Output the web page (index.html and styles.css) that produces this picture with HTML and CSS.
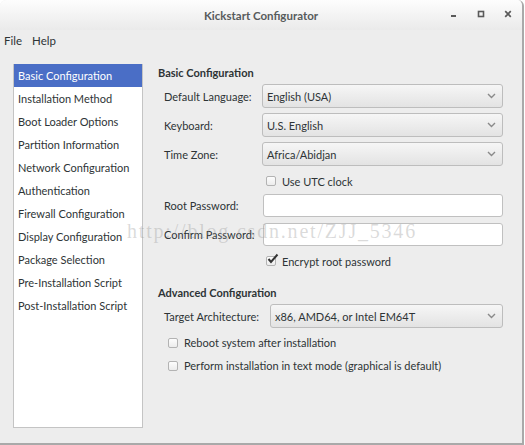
FILE: index.html
```
<!DOCTYPE html>
<html>
<head>
<meta charset="utf-8">
<link rel="stylesheet" href="styles.css">
</head>
<body>
<div class="window">
  <div class="titlebar">
    <div class="title">Kickstart Configurator</div>
    <div class="controls">
      <span class="ctl"><svg width="8" height="8" viewBox="0 0 8 8"><rect x="1" y="5" width="5" height="2" fill="#5a5a5a"/></svg></span>
      <span class="ctl"><svg width="8" height="8" viewBox="0 0 8 8"><rect x="1.5" y="1.5" width="5" height="5" fill="none" stroke="#5a5a5a" stroke-width="1.6"/></svg></span>
      <span class="ctl"><svg width="8" height="8" viewBox="0 0 8 8"><path d="M1.2 1.2 L6.8 6.8 M6.8 1.2 L1.2 6.8" stroke="#5a5a5a" stroke-width="1.7"/></svg></span>
    </div>
  </div>
  <div class="menubar">
    <span class="menu">File</span>
    <span class="menu">Help</span>
  </div>
  <div class="body">
    <ul class="sidebar">
      <li class="item selected">Basic Configuration</li>
      <li class="item">Installation Method</li>
      <li class="item">Boot Loader Options</li>
      <li class="item">Partition Information</li>
      <li class="item">Network Configuration</li>
      <li class="item">Authentication</li>
      <li class="item">Firewall Configuration</li>
      <li class="item">Display Configuration</li>
      <li class="item">Package Selection</li>
      <li class="item">Pre-Installation Script</li>
      <li class="item">Post-Installation Script</li>
    </ul>
    <div class="main">
      <div class="heading">Basic Configuration</div>
      <div class="row combo-row">
        <span class="label">Default Language:</span>
        <div class="combo"><span>English (USA)</span><svg class="chev" width="9" height="6" viewBox="0 0 9 6"><path d="M1 1 L4.5 4.5 L8 1" fill="none" stroke="#8a8a8a" stroke-width="1.4"/></svg></div>
      </div>
      <div class="row combo-row">
        <span class="label">Keyboard:</span>
        <div class="combo"><span>U.S. English</span><svg class="chev" width="9" height="6" viewBox="0 0 9 6"><path d="M1 1 L4.5 4.5 L8 1" fill="none" stroke="#8a8a8a" stroke-width="1.4"/></svg></div>
      </div>
      <div class="row combo-row">
        <span class="label">Time Zone:</span>
        <div class="combo"><span>Africa/Abidjan</span><svg class="chev" width="9" height="6" viewBox="0 0 9 6"><path d="M1 1 L4.5 4.5 L8 1" fill="none" stroke="#8a8a8a" stroke-width="1.4"/></svg></div>
      </div>
      <div class="row check-row indent utc">
        <span class="box"></span><span>Use UTC clock</span>
      </div>
      <div class="row entry-row first-entry">
        <span class="label">Root Password:</span>
        <div class="entry"></div>
      </div>
      <div class="row entry-row">
        <span class="label">Confirm Password:</span>
        <div class="entry"></div>
      </div>
      <div class="row check-row indent encrypt">
        <span class="box checked"><svg width="13" height="12" viewBox="0 0 13 12"><path d="M2.5 6 L5 9 L11.5 1.5" fill="none" stroke="#333" stroke-width="2"/></svg></span><span>Encrypt root password</span>
      </div>
      <div class="heading adv">Advanced Configuration</div>
      <div class="row combo-row arch">
        <span class="label wide">Target Architecture:</span>
        <div class="combo"><span>x86, AMD64, or Intel EM64T</span><svg class="chev" width="9" height="6" viewBox="0 0 9 6"><path d="M1 1 L4.5 4.5 L8 1" fill="none" stroke="#8a8a8a" stroke-width="1.4"/></svg></div>
      </div>
      <div class="row check-row small-indent">
        <span class="box"></span><span>Reboot system after installation</span>
      </div>
      <div class="row check-row small-indent">
        <span class="box"></span><span>Perform installation in text mode (graphical is default)</span>
      </div>
    </div>
  </div>
  <div class="watermark">http://blog.csdn.net/ZJJ_5346</div>
</div>
</body>
</html>
```
FILE: styles.css
```
html, body {
  margin: 0;
  padding: 0;
  background: #ffffff;
}
body {
  font-family: Lato, "DejaVu Sans", sans-serif;
  font-size: 11px;
  color: #2e3436;
}
.window {
  position: relative;
  width: 522px;
  height: 443px;
  background: #ededed;
  border-right: 2px solid #a9a9a9;
  border-bottom: 2px solid #a9a9a9;
  border-radius: 6px 6px 0 0;
  overflow: hidden;
}
.titlebar {
  height: 30px;
  display: flex;
  align-items: center;
  justify-content: center;
  background: linear-gradient(#fdfdfd, #eaeaea);
  position: relative;
}
.title {
  font-weight: bold;
  font-size: 11.5px;
  color: #575b5c;
}
.controls {
  position: absolute;
  right: 10px;
  top: 10px;
  display: flex;
  gap: 19px;
}
.ctl {
  width: 8px;
  height: 8px;
  display: block;
}
.ctl svg { display: block; }
.menubar {
  height: 20px;
  display: flex;
  align-items: center;
  gap: 10px;
  padding-left: 4px;
  font-size: 11.5px;
  color: #2e3436;
}
.body {
  display: flex;
  padding: 14px 0 0 13px;
  gap: 15px;
}
.sidebar {
  list-style: none;
  margin: 0;
  padding: 0;
  width: 128px;
  height: 363px;
  background: #fff;
  border: 1px solid #c4c4c4;
  border-top: 0;
}
.item {
  height: 23px;
  line-height: 23px;
  padding-left: 4px;
  white-space: nowrap;
}
.item.selected {
  background: #4a6ec6;
  color: #fff;
}
.main {
  width: 345px;
}
.heading {
  font-weight: bold;
  height: 18px;
  line-height: 18px;
}
.heading.adv {
  margin-top: 13px;
}
.row {
  display: flex;
  align-items: center;
}
.label {
  width: 98px;
  padding-left: 6px;
  flex: none;
}
.label.wide {
  width: 106px;
}
.combo-row {
  height: 24px;
  margin-bottom: 5px;
}
.heading + .combo-row {
  margin-top: 2px;
}
.combo {
  flex: 1;
  height: 22px;
  border: 1px solid #bdbdbd;
  border-radius: 3px;
  background: linear-gradient(#f6f6f6, #e3e3e3);
  display: flex;
  align-items: center;
  justify-content: space-between;
  padding: 0 6px 0 4px;
}
.chev { display: block; }
.check-row {
  height: 20px;
  gap: 6px;
}
.check-row.indent {
  padding-left: 108px;
}
.check-row.small-indent {
  padding-left: 10px;
  height: 23px;
}
.arch { margin-bottom: 3px; }
.box {
  width: 8px;
  height: 8px;
  border: 1px solid #b3b3b3;
  border-radius: 2px;
  background: linear-gradient(#fdfdfd, #ececec);
  position: relative;
  flex: none;
}
.box.checked svg {
  position: absolute;
  left: -1px;
  top: -4px;
}
.entry-row {
  height: 23px;
  margin-bottom: 6px;
}
.first-entry { margin-top: 3px; }
.entry {
  flex: 1;
  height: 21px;
  background: #fff;
  border: 1px solid #c0c0c0;
  border-radius: 3px;
  margin-left: 1px;
}
.encrypt { margin-top: -1px; }
.watermark {
  position: absolute;
  left: 127px;
  top: 220px;
  font-family: "Liberation Serif", serif;
  font-size: 20px;
  letter-spacing: 1.8px;
  color: rgba(150, 150, 150, 0.35);
  white-space: nowrap;
  pointer-events: none;
}
```
